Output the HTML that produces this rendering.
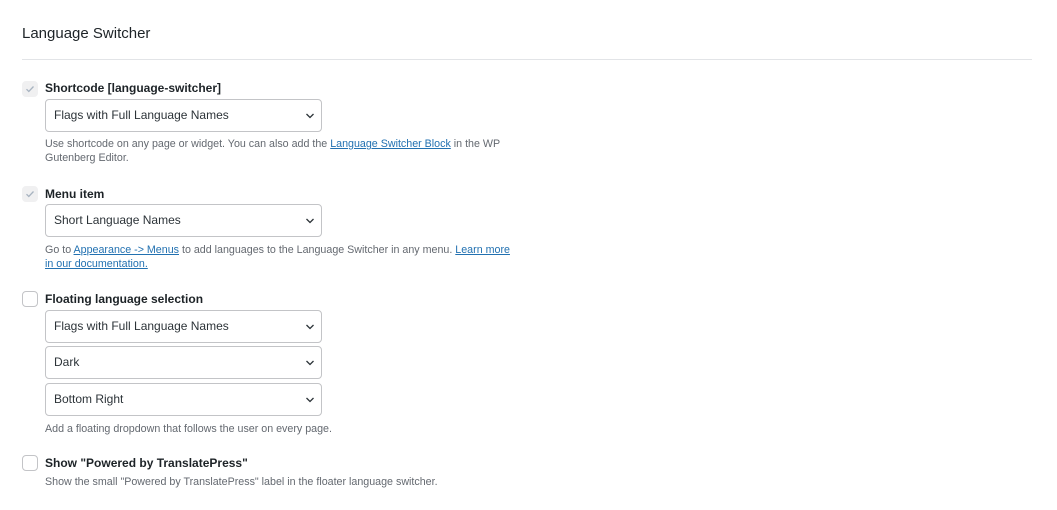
<!DOCTYPE html>
<html><head><style>
*{box-sizing:border-box;margin:0;padding:0}
body{width:1057px;height:510px;background:#fff;font-family:"Liberation Sans",sans-serif;color:#1d2327;position:relative;overflow:hidden}
h1{position:absolute;left:22px;top:25px;font-size:15px;font-weight:normal;color:#1d2327}
.hr{position:absolute;left:22px;top:59px;width:1010px;height:1px;background:#e2e4e7}
.cb{position:absolute;left:22px;width:16px;height:16px;border:1px solid #c3c4c7;border-radius:4px;background:#fff}
.cb.on{background:#f0f0f1;border-color:#f0f0f1}
.cb.on svg{position:absolute;left:2px;top:2px}
.lbl{position:absolute;left:45px;font-size:12px;font-weight:bold;color:#1d2327}
.sel{position:absolute;left:45px;width:277px;height:33px;border:1px solid #c3c4c7;border-radius:4px;font-size:12px;line-height:31px;padding-left:8px;color:#2c3338}
.sel svg{position:absolute;right:6px;top:11px}
.help{position:absolute;left:45px;font-size:10.7px;color:#646970;line-height:14px;width:490px}
.help a{color:#2271b1;text-decoration:underline}
</style></head><body>
<h1>Language Switcher</h1>
<div class="hr"></div>

<div class="cb on" style="top:81px"><svg width="10" height="10" viewBox="0 0 10 10"><path d="M1.5 5.2l2.3 2.3 4.7-5" fill="none" stroke="#a7b3c0" stroke-width="1.3"/></svg></div>
<div class="lbl" style="top:81px">Shortcode [language-switcher]</div>
<div class="sel" style="top:99px">Flags with Full Language Names<svg width="10" height="10" viewBox="0 0 10 10"><path d="M1.5 3l3.5 3.5 3.5-3.5" fill="none" stroke="#2c3338" stroke-width="1.3"/></svg></div>
<div class="help" style="top:137px">Use shortcode on any page or widget. You can also add the <a>Language Switcher Block</a> in the WP<br>Gutenberg Editor.</div>

<div class="cb on" style="top:186px"><svg width="10" height="10" viewBox="0 0 10 10"><path d="M1.5 5.2l2.3 2.3 4.7-5" fill="none" stroke="#a7b3c0" stroke-width="1.3"/></svg></div>
<div class="lbl" style="top:187px">Menu item</div>
<div class="sel" style="top:204px">Short Language Names<svg width="10" height="10" viewBox="0 0 10 10"><path d="M1.5 3l3.5 3.5 3.5-3.5" fill="none" stroke="#2c3338" stroke-width="1.3"/></svg></div>
<div class="help" style="top:243px">Go to <a>Appearance -&gt; Menus</a> to add languages to the Language Switcher in any menu. <a>Learn more</a><br><a>in our documentation.</a></div>

<div class="cb" style="top:291px"></div>
<div class="lbl" style="top:292px">Floating language selection</div>
<div class="sel" style="top:310px">Flags with Full Language Names<svg width="10" height="10" viewBox="0 0 10 10"><path d="M1.5 3l3.5 3.5 3.5-3.5" fill="none" stroke="#2c3338" stroke-width="1.3"/></svg></div>
<div class="sel" style="top:346px">Dark<svg width="10" height="10" viewBox="0 0 10 10"><path d="M1.5 3l3.5 3.5 3.5-3.5" fill="none" stroke="#2c3338" stroke-width="1.3"/></svg></div>
<div class="sel" style="top:383px">Bottom Right<svg width="10" height="10" viewBox="0 0 10 10"><path d="M1.5 3l3.5 3.5 3.5-3.5" fill="none" stroke="#2c3338" stroke-width="1.3"/></svg></div>
<div class="help" style="top:422px">Add a floating dropdown that follows the user on every page.</div>

<div class="cb" style="top:455px"></div>
<div class="lbl" style="top:456px">Show "Powered by TranslatePress"</div>
<div class="help" style="top:475px">Show the small "Powered by TranslatePress" label in the floater language switcher.</div>
</body></html>
